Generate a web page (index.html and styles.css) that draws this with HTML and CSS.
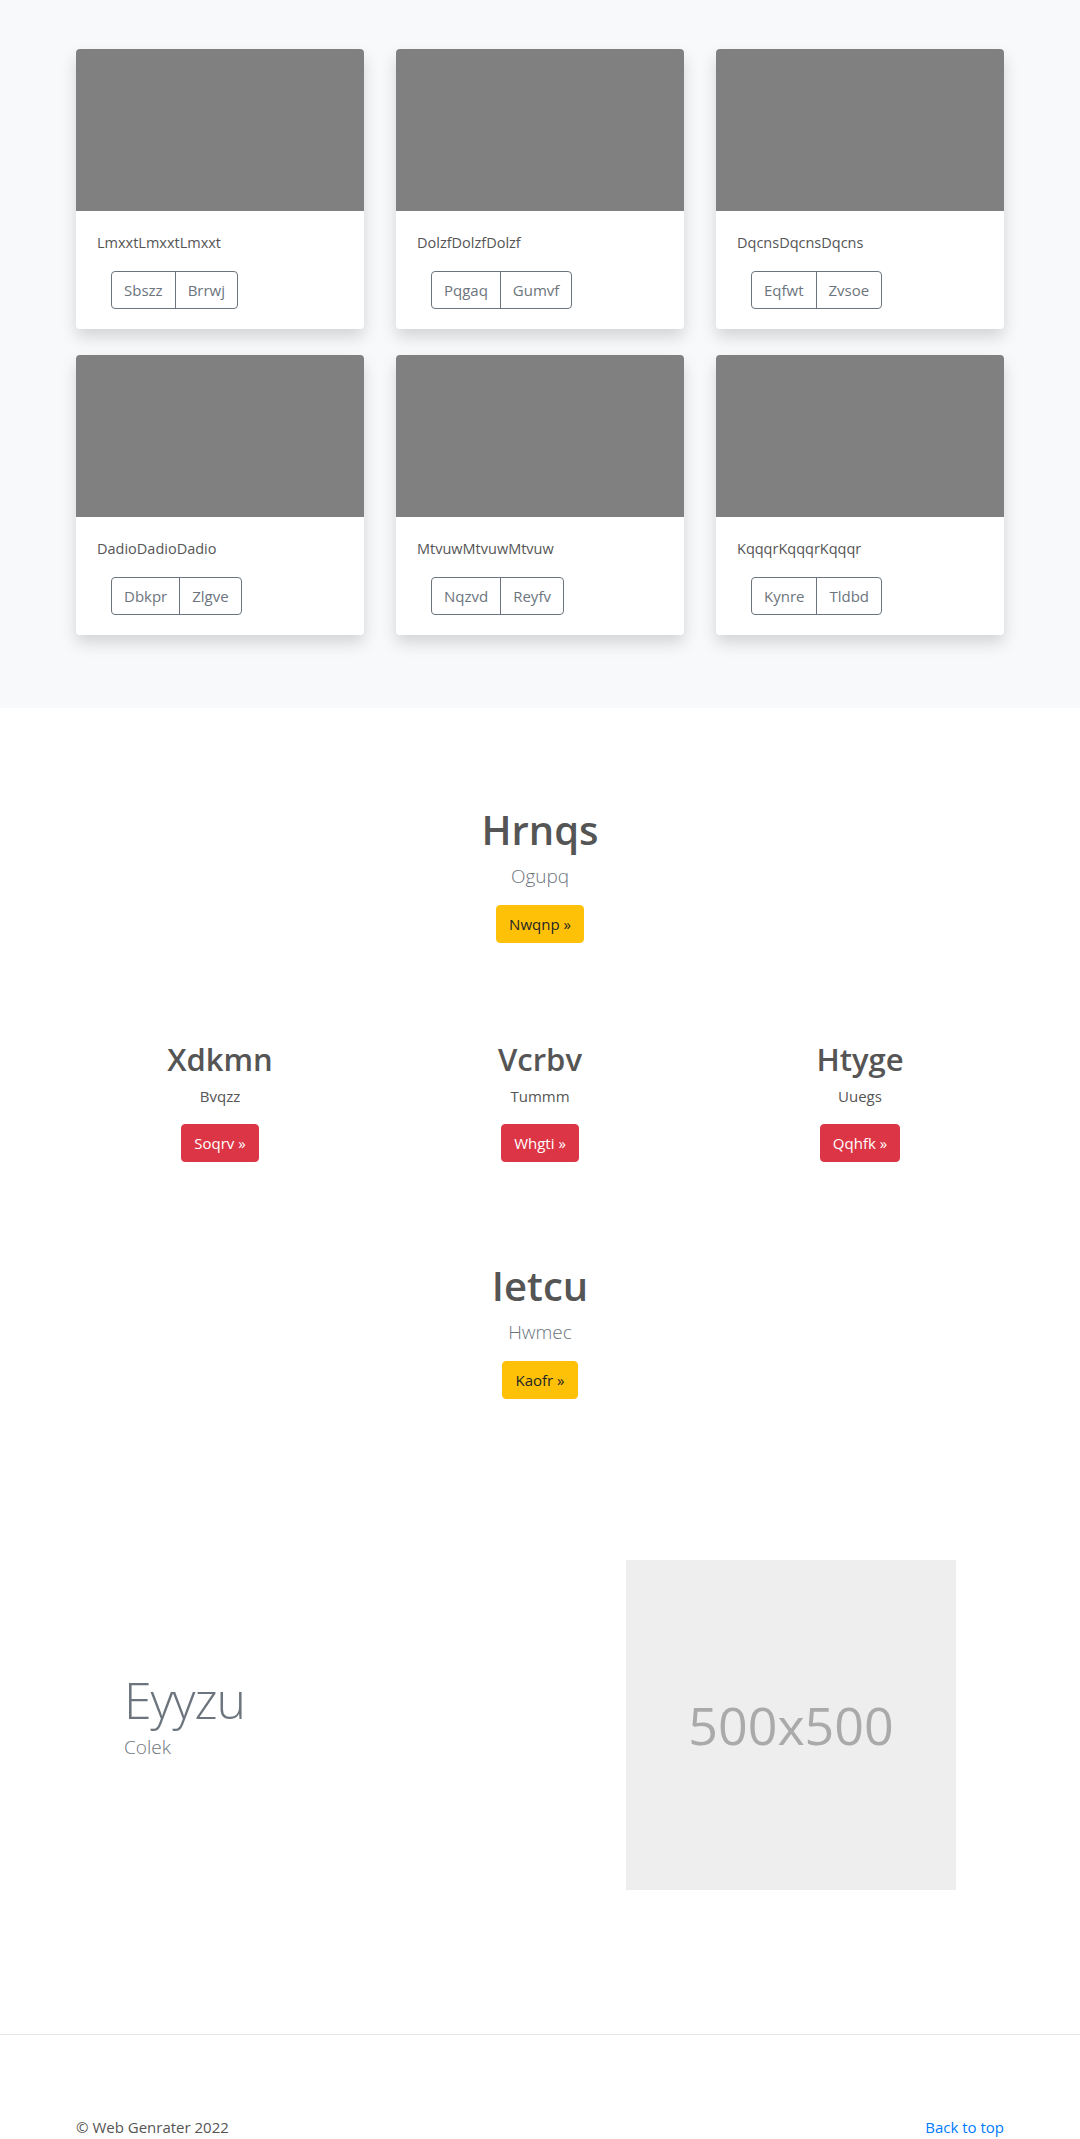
FILE: index.html
```html
<!DOCTYPE html>
<html lang="en">
<head>
<meta charset="utf-8">
<title>Web Genrater</title>
<link rel="stylesheet" href="styles.css">
</head>
<body>
<main>
  <section class="album">
    <div class="container">
      <div class="card-grid">
        <div class="card">
          <div class="thumb"></div>
          <div class="card-body">
            <p class="card-text">LmxxtLmxxtLmxxt</p>
            <div class="btn-group"><span class="btn-outline">Sbszz</span><span class="btn-outline">Brrwj</span></div>
          </div>
        </div>
        <div class="card">
          <div class="thumb"></div>
          <div class="card-body">
            <p class="card-text">DolzfDolzfDolzf</p>
            <div class="btn-group"><span class="btn-outline">Pqgaq</span><span class="btn-outline">Gumvf</span></div>
          </div>
        </div>
        <div class="card">
          <div class="thumb"></div>
          <div class="card-body">
            <p class="card-text">DqcnsDqcnsDqcns</p>
            <div class="btn-group"><span class="btn-outline">Eqfwt</span><span class="btn-outline">Zvsoe</span></div>
          </div>
        </div>
        <div class="card">
          <div class="thumb"></div>
          <div class="card-body">
            <p class="card-text">DadioDadioDadio</p>
            <div class="btn-group"><span class="btn-outline">Dbkpr</span><span class="btn-outline">Zlgve</span></div>
          </div>
        </div>
        <div class="card">
          <div class="thumb"></div>
          <div class="card-body">
            <p class="card-text">MtvuwMtvuwMtvuw</p>
            <div class="btn-group"><span class="btn-outline">Nqzvd</span><span class="btn-outline">Reyfv</span></div>
          </div>
        </div>
        <div class="card">
          <div class="thumb"></div>
          <div class="card-body">
            <p class="card-text">KqqqrKqqqrKqqqr</p>
            <div class="btn-group"><span class="btn-outline">Kynre</span><span class="btn-outline">Tldbd</span></div>
          </div>
        </div>
      </div>
    </div>
  </section>

  <section class="hero hero-first">
    <h1 class="hero-title">Hrnqs</h1>
    <p class="lead">Ogupq</p>
    <a class="btn btn-warning" href="#">Nwqnp »</a>
  </section>

  <section class="trio">
    <div class="trio-col">
      <h2 class="trio-title">Xdkmn</h2>
      <p class="trio-text">Bvqzz</p>
      <a class="btn btn-danger" href="#">Soqrv »</a>
    </div>
    <div class="trio-col">
      <h2 class="trio-title">Vcrbv</h2>
      <p class="trio-text">Tummm</p>
      <a class="btn btn-danger" href="#">Whgti »</a>
    </div>
    <div class="trio-col">
      <h2 class="trio-title">Htyge</h2>
      <p class="trio-text">Uuegs</p>
      <a class="btn btn-danger" href="#">Qqhfk »</a>
    </div>
  </section>

  <section class="hero hero-second">
    <h1 class="hero-title">Ietcu</h1>
    <p class="lead">Hwmec</p>
    <a class="btn btn-warning" href="#">Kaofr »</a>
  </section>

  <section class="feature">
    <div class="feature-text">
      <h2 class="feature-title">Eyyzu</h2>
      <p class="feature-lead">Colek</p>
    </div>
    <div class="placeholder"><span>500x500</span></div>
  </section>
</main>

<hr class="divider">

<footer class="footer">
  <p class="copy">© Web Genrater 2022</p>
  <a class="top-link" href="#">Back to top</a>
</footer>
</body>
</html>
```

FILE: styles.css
```css
* {
  box-sizing: border-box;
}

html, body {
  margin: 0;
  padding: 0;
}

body {
  font-family: "Open Sans", "Noto Sans", "Liberation Sans", sans-serif;
  font-size: 16px;
  line-height: 1.5;
  color: #212529;
  background: #fff;
}

p {
  margin: 0;
}

a {
  text-decoration: none;
}

/* Album */
.album {
  background: #f8f9fa;
  padding: 49px 0 73px;
}

.container {
  width: 928px;
  margin: 0 auto;
}

.card-grid {
  display: grid;
  grid-template-columns: repeat(3, 288px);
  column-gap: 32px;
  row-gap: 26px;
}

.card {
  background: #fff;
  border-radius: 4px;
  box-shadow: 0 8px 16px rgba(0, 0, 0, 0.15);
  overflow: hidden;
}

.thumb {
  height: 162px;
  background: #808080;
}

.card-body {
  padding: 20px 20px 20px 21px;
}

.card-text {
  font-size: 14.5px;
  line-height: 24px;
  color: #555;
}

.btn-group {
  display: inline-flex;
  margin: 16px 0 0 14px;
  border: 1px solid #6c757d;
  border-radius: 4px;
}

.btn-outline {
  padding: 6px 12px;
  font-size: 15px;
  line-height: 24px;
  color: #6c757d;
}

.btn-outline + .btn-outline {
  border-left: 1px solid #6c757d;
}

/* Buttons */
.btn {
  display: inline-block;
  padding: 6px 12px;
  font-size: 15px;
  line-height: 24px;
  border-radius: 4px;
  border: 1px solid transparent;
}

.btn-warning {
  background: #ffc107;
  border-color: #ffc107;
  color: #212529;
}

.btn-danger {
  background: #dc3545;
  border-color: #dc3545;
  color: #fff;
}

/* Hero */
.hero {
  text-align: center;
}

.hero-first {
  padding-top: 98px;
}

.hero-second {
  padding-top: 100px;
}

.hero-title {
  margin: 0 0 7px;
  font-size: 40px;
  line-height: 48px;
  font-weight: 600;
  color: #555;
}

.lead {
  font-size: 19px;
  line-height: 30px;
  font-weight: 300;
  color: #6c757d;
  margin-bottom: 14px;
}

/* Trio */
.trio {
  width: 960px;
  margin: 0 auto;
  padding-top: 97px;
  display: grid;
  grid-template-columns: repeat(3, 1fr);
  text-align: center;
}

.trio-title {
  margin: 0 0 6px;
  font-size: 31px;
  line-height: 38px;
  font-weight: 600;
  color: #555;
}

.trio-text {
  font-size: 15px;
  line-height: 24px;
  color: #555;
  margin-bottom: 16px;
}

/* Feature */
.feature {
  width: 832px;
  margin: 0 auto;
  padding: 161px 0 144px;
  display: grid;
  grid-template-columns: 1fr 330px;
  align-items: center;
}

.feature-text {
  padding-bottom: 22px;
}

.feature-title {
  margin: 0;
  font-size: 50px;
  line-height: 66px;
  font-weight: 300;
  letter-spacing: -1px;
  color: #6c757d;
}

.feature-lead {
  font-size: 19px;
  line-height: 28px;
  font-weight: 300;
  color: #6c757d;
}

.placeholder {
  width: 330px;
  height: 330px;
  background: #eee;
  display: flex;
  align-items: center;
  justify-content: center;
}

.placeholder span {
  font-size: 52px;
  color: #aaa;
}

/* Footer */
.divider {
  margin: 0;
  border: 0;
  border-top: 1px solid #e5e5e5;
}

.footer {
  width: 928px;
  margin: 0 auto;
  padding: 80px 0 48px;
  display: flex;
  justify-content: space-between;
  align-items: center;
  font-size: 15px;
  line-height: 24px;
}

.copy {
  color: #555;
}

.top-link {
  color: #007bff;
}
```
